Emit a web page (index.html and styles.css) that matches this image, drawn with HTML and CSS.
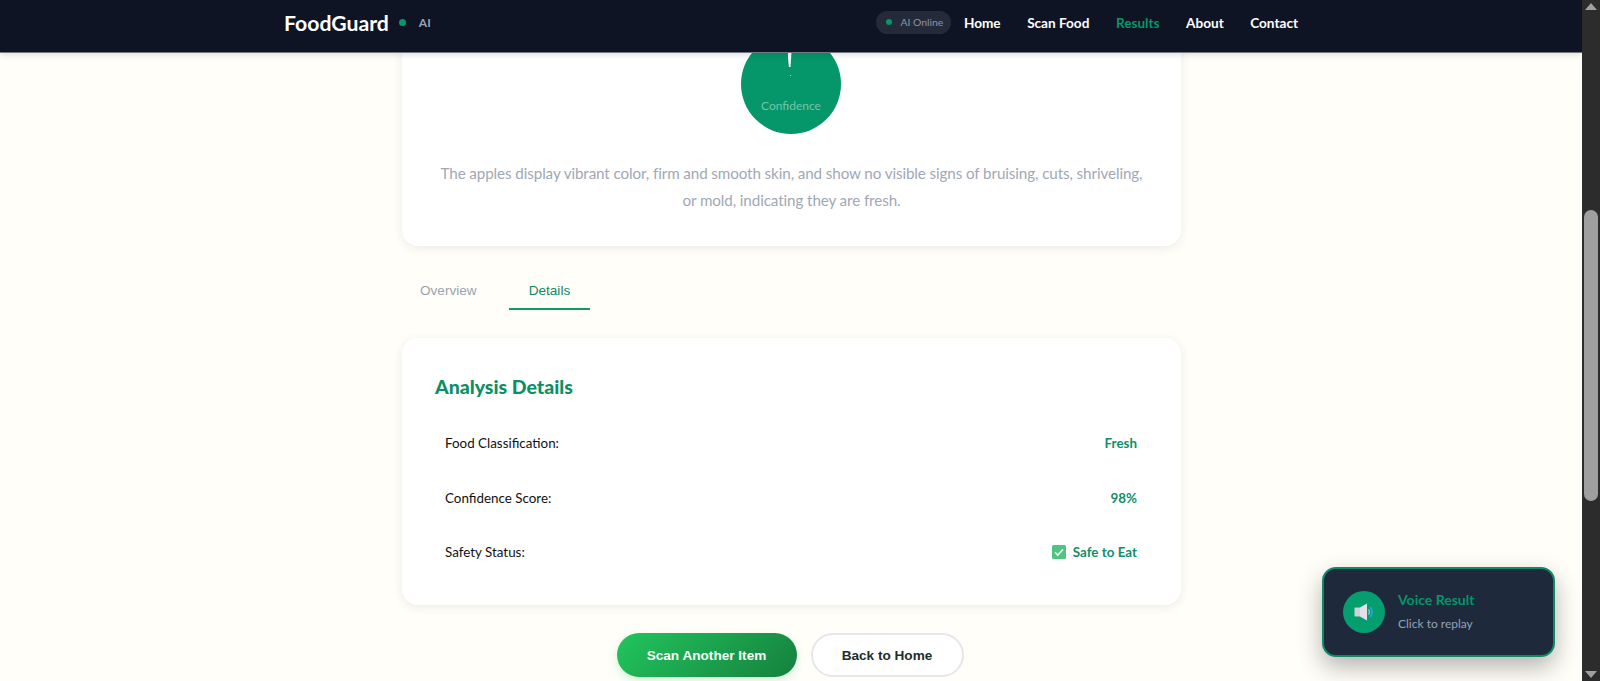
FILE: index.html
```html
<!DOCTYPE html>
<html lang="en">
<head>
<meta charset="utf-8">
<title>FoodGuard AI</title>
<link rel="stylesheet" href="styles.css">
</head>
<body>
<div class="viewport">
  <header class="topbar">
    <div class="brand">
      <span class="brand-name">FoodGuard</span>
      <span class="brand-dot"></span>
      <span class="brand-ai">AI</span>
    </div>
    <nav class="nav">
      <span class="status"><span class="status-dot"></span>AI Online</span>
      <a class="nav-link">Home</a>
      <a class="nav-link">Scan Food</a>
      <a class="nav-link nav-active">Results</a>
      <a class="nav-link">About</a>
      <a class="nav-link">Contact</a>
    </nav>
  </header>
  <main class="content">
    <section class="card summary">
      <div class="gauge">
        <span class="needle"></span>
        <span class="needle-dot"></span>
        <span class="gauge-label">Confidence</span>
      </div>
      <p class="explain">The apples display vibrant color, firm and smooth skin, and show no visible signs of bruising, cuts, shriveling, or mold, indicating they are fresh.</p>
    </section>
    <div class="tabs">
      <button class="tab">Overview</button>
      <button class="tab tab-active">Details</button>
    </div>
    <section class="card details">
      <h2 class="details-title">Analysis Details</h2>
      <div class="row"><span class="row-label">Food Classification:</span><span class="row-value">Fresh</span></div>
      <div class="row"><span class="row-label">Confidence Score:</span><span class="row-value">98%</span></div>
      <div class="row"><span class="row-label">Safety Status:</span><span class="row-value row-safe">
        <svg class="check" viewBox="0 0 14 14" aria-hidden="true"><rect width="14" height="14" rx="1.5" fill="#4fc581"/><path d="M3 7.2l2.8 2.8L11 4.4" fill="none" stroke="#eafff2" stroke-width="1.6"/></svg>Safe to Eat</span></div>
    </section>
    <div class="actions">
      <button class="btn btn-primary">Scan Another Item</button>
      <button class="btn btn-ghost">Back to Home</button>
    </div>
  </main>
  <aside class="voice">
    <div class="voice-icon">
      <svg viewBox="0 0 22 22" width="22" height="22" aria-hidden="true">
        <rect x="1.5" y="6.5" width="6" height="9" rx="1" fill="#d2d0da"/>
        <path d="M7 6.5L14 2.5V19.5L7 15.5Z" fill="#e2e0e8"/>
        <path d="M15.4 8.5a3.5 3.5 0 0 1 0 5" fill="none" stroke="#7cc0e4" stroke-width="1.4"/>
        <path d="M17 6a7 7 0 0 1 0 10" fill="none" stroke="#2f9fe0" stroke-width="1.7"/>
      </svg>
    </div>
    <div class="voice-text">
      <div class="voice-title">Voice Result</div>
      <div class="voice-sub">Click to replay</div>
    </div>
  </aside>
</div>
<div class="scrollbar">
  <span class="arrow arrow-up"></span>
  <div class="track"><div class="thumb"></div></div>
  <span class="arrow arrow-down"></span>
</div>
</body>
</html>
```
FILE: styles.css
```css
* { box-sizing: border-box; }
html, body { margin: 0; height: 681px; overflow: hidden; }
body { display: flex; font-family: Lato, "Noto Sans", sans-serif; background: #fffef9; }
.viewport { position: relative; flex: 1; height: 681px; overflow: hidden; }
.topbar {
  position: relative; z-index: 5; height: 53px; background: #0f1424;
  border-bottom: 1px solid #6f7a80;
  display: flex; justify-content: space-between; align-items: center;
  padding: 0 284px 7px 284px;
  box-shadow: 0 2px 6px rgba(0,0,0,.12);
}
.brand { display: flex; align-items: center; }
.brand-name { color: #fff; font-size: 21.2px; font-weight: 700; }
.brand-dot { width: 7px; height: 7px; border-radius: 50%; background: #059669; margin: -1px 0 0 10px; }
.brand-ai { color: #94a3b8; font-size: 12px; font-weight: 700; margin: -1px 0 0 13px; }
.nav { display: flex; align-items: center; gap: 26.5px; }
.nav-link { color: #fff; font-size: 13.6px; font-weight: 700; }
.nav-active { color: #059669; }
.status {
  display: flex; align-items: center; height: 23px; width: 75px; padding-left: 10px; border-radius: 12px;
  background: #252a3a; color: #8d95a5; font-size: 10.4px; margin: -1px -14px 0 0;
}
.status-dot { width: 6px; height: 6px; border-radius: 50%; background: #059669; margin-right: 8px; }
.content { width: 779px; margin: -41px 0 0 402px; }
.card {
  background: #fff; border-radius: 16px;
  box-shadow: 0 2px 10px rgba(60,60,40,.1);
}
.summary { height: 234px; padding-top: 22px; }
.gauge {
  position: relative; width: 100px; height: 100px; margin: 0 0 0 339px; border-radius: 50%;
  background: #059669; display: flex; justify-content: center; align-items: flex-end;
}
.needle {
  position: absolute; left: 46.5px; top: 18px; width: 4px; height: 15px; background: #fff;
  clip-path: polygon(0 0, 100% 0, 75% 100%, 35% 100%);
}
.needle-dot { position: absolute; left: 49px; top: 41px; width: 1px; height: 1px; background: rgba(255,255,255,.6); }
.gauge-label { color: rgba(255,255,255,.45); font-size: 12px; margin-bottom: 21px; }
.explain {
  margin: 26px auto 0; width: 716px; text-align: center; color: #a0a8b5;
  font-size: 15.2px; letter-spacing: -.1px; line-height: 27px;
}
.tabs { display: flex; margin: 21px 0 0 -2px; height: 43px; }
.tab {
  border: 0; background: none; font-family: "Liberation Sans", Arial, sans-serif;
  font-size: 13.6px; color: #9ca3af; height: 43px; padding: 6px 20px 0; margin: 0; border-bottom: 2px solid transparent;
}
.tab-active { color: #0f8a63; border-bottom-color: #0f9a6e; margin-left: 12px; }
.details { height: 267px; margin-top: 28px; padding: 36px 44px 0 33px; }
.details-title { margin: 0 0 16px; color: #0c8f66; font-size: 19.5px; font-weight: 900; line-height: 26px; }
.row { display: flex; justify-content: space-between; align-items: center; height: 54.5px; padding-left: 10px; font-size: 13.4px; color: #111; }
.row-value { color: #0f8f68; font-weight: 700; display: flex; align-items: center; }
.check { width: 14px; height: 14px; margin-right: 7px; }
.actions { display: flex; gap: 14px; justify-content: center; margin: 28px 0 0 -3px; }
.btn {
  height: 44px; border-radius: 22px; font-family: "Liberation Sans", Arial, sans-serif;
  font-size: 13.6px; font-weight: 700; padding: 0;
}
.btn-primary {
  width: 180px; border: 0; color: #f2fff6;
  background: linear-gradient(135deg, #22c55e, #15803d);
  box-shadow: 0 4px 10px rgba(34,197,94,.2);
}
.btn-ghost { width: 153px; background: #fff; border: 2px solid #e5e7eb; color: #1f2d2a; }
.voice {
  position: absolute; left: 1322px; top: 567px; width: 233px; height: 90px;
  display: flex; align-items: center; gap: 13px; padding-left: 19px;
  background: #1e293b; border: 2px solid #0f8a66; border-radius: 14px;
  box-shadow: 0 10px 25px rgba(0,0,0,.3);
}
.voice-icon {
  width: 42px; height: 42px; border-radius: 50%; background: #059f6f;
  display: flex; align-items: center; justify-content: center;
}
.voice-title { color: #059669; font-size: 14px; font-weight: 700; line-height: 18px; }
.voice-sub { color: #94a3b8; font-size: 12px; line-height: 18px; margin-top: 6px; }
.scrollbar { width: 18px; height: 681px; background: #2c2c2c; display: flex; flex-direction: column; align-items: center; }
.arrow { width: 0; height: 0; border-left: 6px solid transparent; border-right: 6px solid transparent; margin: 3px 0; }
.arrow-up { border-bottom: 7px solid #a0a0a0; }
.arrow-down { border-top: 7px solid #a0a0a0; }
.track { flex: 1; width: 100%; padding-top: 197px; display: flex; justify-content: center; }
.thumb { width: 14px; height: 291px; background: #9f9f9f; border-radius: 7px; }
```
